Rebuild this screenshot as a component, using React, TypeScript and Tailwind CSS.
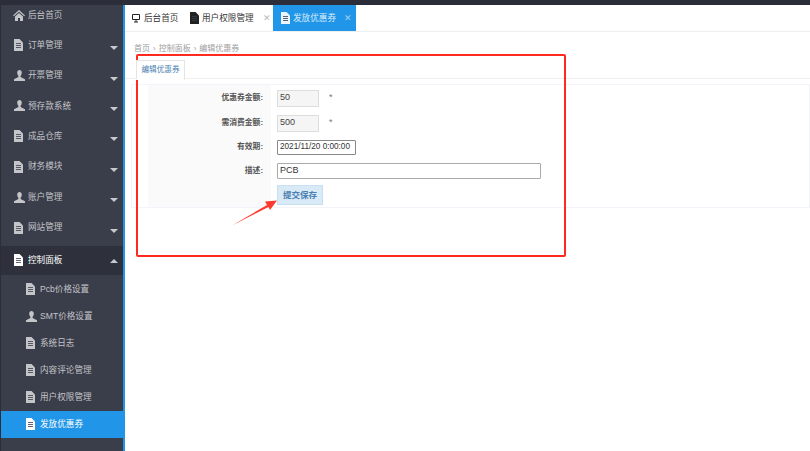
import React from "react";

const FONT = "font-['Liberation_Sans','Noto_Sans_CJK_SC',sans-serif]";

const DocIcon = ({ className = "" }: { className?: string }) => (
  <svg width="9" height="12" viewBox="0 0 9 12" className={className} fill="currentColor">
    <path d="M0 0h5.500L9 3.500V12H0z" />
    <path d="M2 4.500h5M2 6.500h5M2 8.500h5" stroke="#3a3d4a" strokeWidth="1" opacity="0.8" />
  </svg>
);

const UserIcon = ({ className = "" }: { className?: string }) => (
  <svg width="11" height="11" viewBox="0 0 11 11" className={className} fill="currentColor">
    <path d="M3.200 2.600C3.200 1 4.200 0 5.500 0s2.300 1 2.300 2.600c0 1.400-.6 2.600-1.200 3.200v1.100L11 9.200V11H0V9.200l4.400-2.300V5.800C3.800 5.200 3.200 4 3.200 2.600z" />
  </svg>
);

const HomeIcon = () => (
  <svg width="12" height="11" viewBox="0 0 12 11" fill="currentColor">
    <path d="M6 0l6 5.500-.8.800L6 1.700.8 6.300 0 5.500z" />
    <path d="M2 6.500L6 3l4 3.500V11H7V8H5v3H2z" />
  </svg>
);

const Caret = ({ up }: { up?: boolean }) => (
  <span
    className={
      up
        ? "w-0 h-0 border-x-[4px] border-x-transparent border-b-[4px] border-b-[#c8c9ce]"
        : "w-0 h-0 border-x-[4px] border-x-transparent border-t-[4px] border-t-[#c8c9ce]"
    }
  />
);

const topItems = [
  { label: "订单管理", icon: "doc" },
  { label: "开票管理", icon: "user" },
  { label: "预存款系统", icon: "user" },
  { label: "成品仓库", icon: "doc" },
  { label: "财务模块", icon: "doc" },
  { label: "账户管理", icon: "user" },
  { label: "网站管理", icon: "doc" },
];

const subItems = [
  { label: "Pcb价格设置", icon: "doc" },
  { label: "SMT价格设置", icon: "user" },
  { label: "系统日志", icon: "doc" },
  { label: "内容评论管理", icon: "doc" },
  { label: "用户权限管理", icon: "doc" },
  { label: "发放优惠券", icon: "doc", active: true },
];

const Sidebar = () => (
  <aside className="w-[125px] shrink-0 bg-[#3a3d4a] border-l border-l-[#2b2e38] border-r-2 border-r-[#2196e8] text-[#c4c5c9] text-[8.600px] flex flex-col">
    <div className="h-[20px] mb-[5px] flex items-center pl-[12px] gap-[3px]">
      <HomeIcon />
      <span>后台首页</span>
    </div>
    {topItems.map((item) => (
      <div key={item.label} className="h-[30.400px] flex items-center pl-[13px] pr-[5px]">
        <span className="w-[14px] flex">
          {item.icon === "doc" ? <DocIcon /> : <UserIcon />}
        </span>
        <span className="flex-1">{item.label}</span>
        <span className="mt-[6px] flex"><Caret /></span>
      </div>
    ))}
    <div className="h-[29px] mt-[3px] bg-[#2e313b] flex items-center pl-[13px] pr-[5px] text-white">
      <span className="w-[14px] flex"><DocIcon /></span>
      <span className="flex-1">控制面板</span>
      <span className="mt-[2px] flex"><Caret up /></span>
    </div>
    <div className="pt-[1px] flex flex-col">
      {subItems.map((item) => (
        <div
          key={item.label}
          className={
            item.active
              ? "h-[27px] flex items-center pl-[25px] bg-[#2196e8] text-white"
              : "h-[27px] flex items-center pl-[25px]"
          }
        >
          <span className="w-[14px] flex">
            {item.icon === "doc" ? <DocIcon /> : <UserIcon />}
          </span>
          <span>{item.label}</span>
        </div>
      ))}
    </div>
  </aside>
);

const TabBar = () => (
  <div className="h-[27px] flex items-stretch border-b border-[#eeeeee] text-[8.600px] text-[#333] whitespace-nowrap">
    <div className="w-[60px] shrink-0 pl-[7px] flex items-center gap-[4px]">
      <svg width="8" height="9" viewBox="0 0 8 9" fill="none" stroke="#222" strokeWidth="1">
        <path d="M.5.500h7v5h-7zM2 8h4M4 6v2" />
      </svg>
      <span>后台首页</span>
    </div>
    <div className="w-[88px] shrink-0 pl-[5px] flex items-center gap-[3px]">
      <DocIcon className="text-[#222]" />
      <span>用户权限管理</span>
      <span className="ml-[6px] text-[#bbb] text-[9px] leading-none">✕</span>
    </div>
    <div className="w-[83px] shrink-0 bg-[#2196e8] text-[#d8ecfb] pl-[8px] flex items-center gap-[3px]">
      <DocIcon className="text-[#eaf5fd]" />
      <span>发放优惠券</span>
      <span className="ml-[5px] text-[#9fd0f3] text-[9px] leading-none">✕</span>
    </div>
  </div>
);

const Row = ({ label, children, h }: { label: string; children: React.ReactNode; h: string }) => (
  <div className={`${h} flex items-center`}>
    <div className="w-[123px] h-full bg-[#fafafa] flex items-center justify-end pr-[8px] font-bold text-[#555] text-[7.800px]">
      {label}
    </div>
    <div className="pl-[6px] flex items-center">{children}</div>
  </div>
);

const Form = () => (
  <div className="flex-1 flex flex-col">
    <div className="h-[19px] ml-[9px] mt-[7px] flex items-center text-[8px] text-[#a0a0a0] gap-[3px]">
      <span>首页</span><span>›</span><span>控制面板</span><span>›</span><span>编辑优惠券</span>
    </div>
    <div className="h-[22px] pt-[2px] ml-[11px] flex">
      <div className="w-[49px] h-[20px] border border-[#e4e4e4] border-b-white bg-white text-[#4a7fb0] text-[7.600px] flex items-center justify-center relative z-10">
        编辑优惠券
      </div>
    </div>
    <div className="border-t border-[#eeeeee] mt-[-2px]" />
    <div className="mt-[5px] ml-[6px] border border-[#f3f3fa] pl-[16px] text-[9px]">
      <Row label="优惠券金额:" h="h-[26px]">
        <span className="w-[42px] h-[17px] border border-[#dddddd] bg-[#f5f5f5] text-[#444] pl-[2px] flex items-center">50</span>
        <span className="ml-[10px] text-[#777]">*</span>
      </Row>
      <Row label="需消费金额:" h="h-[24px]">
        <span className="w-[42px] h-[17px] border border-[#dddddd] bg-[#f5f5f5] text-[#444] pl-[2px] flex items-center">500</span>
        <span className="ml-[10px] text-[#777]">*</span>
      </Row>
      <Row label="有效期:" h="h-[24px]">
        <span className="w-[79px] h-[15px] border border-[#888888] rounded-[1px] text-[#333] text-[8.200px] pl-[2px] flex items-center whitespace-nowrap">2021/11/20 0:00:00</span>
      </Row>
      <Row label="描述:" h="h-[24px]">
        <span className="w-[264px] h-[16px] border border-[#aaaaaa] rounded-[1px] text-[#333] pl-[2px] flex items-center">PCB</span>
      </Row>
      <Row label="" h="h-[24px]">
        <span className="w-[46px] h-[20px] bg-[#d9eaf7] border border-[#c9e0f2] text-[#4a7fb0] text-[8.500px] font-bold flex items-center justify-center">提交保存</span>
      </Row>
    </div>
  </div>
);

export default function App() {
  return (
    <div className={`${FONT} relative w-[810px] h-[451px] overflow-hidden bg-white flex flex-col`}>
      <div className="h-[5px] shrink-0 bg-[#2b2e38]" />
      <div className="flex-1 flex min-h-0">
        <Sidebar />
        <main className="flex-1 flex flex-col min-w-0">
          <TabBar />
          <Form />
        </main>
      </div>
      {/* annotation drawn on top of the screenshot */}
      <div className="absolute left-[136px] top-[54px] w-[430px] h-[203px] border-2 border-[#ff2a1f] rounded-[2px]" />
      <svg className="absolute left-[230px] top-[195px]" width="50" height="34" viewBox="0 0 50 34">
        <path d="M2 30.500L37 10 35 6.500 47 5.500 40 15 38.500 12z" fill="#ff3b2f" />
      </svg>
    </div>
  );
}
